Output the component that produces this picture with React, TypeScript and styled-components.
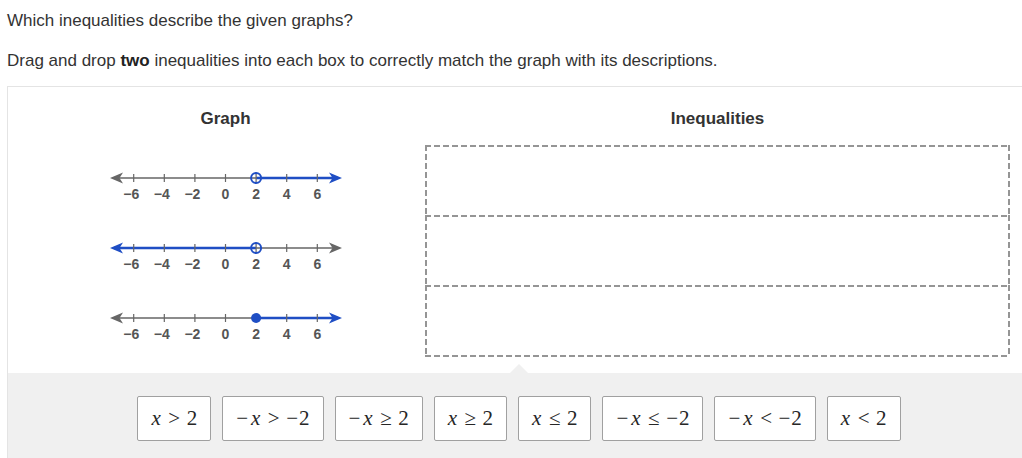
import styled, { createGlobalStyle } from "styled-components";

const GlobalStyle = createGlobalStyle`
  html, body {
    margin: 0;
    padding: 0;
    background: #ffffff;
    overflow: hidden;
  }
  body {
    font-family: "Liberation Sans", Arial, sans-serif;
    color: #333333;
  }
`;

const BLUE = "#1f4ec4";
const GRAY = "#666666";

const ORIGIN = 119.5;
const UNIT = 15.3;
const LINE_Y = 13;
const px = (v: number) => ORIGIN + v * UNIT;

type Ray = "right" | "left";

const arrowLeft = (color: string) => (
  <path d="M4 13 L17 7.5 L13.5 13 L17 18.5 Z" fill={color} />
);
const arrowRight = (color: string) => (
  <path d="M236 13 L223 7.5 L226.5 13 L223 18.5 Z" fill={color} />
);

const NumberLine = ({ ray, closed }: { ray: Ray; closed: boolean }) => {
  const labels = [-6, -4, -2, 0, 2, 4, 6];
  const at = px(2);
  const leftColor = ray === "left" ? BLUE : GRAY;
  const rightColor = ray === "right" ? BLUE : GRAY;
  return (
    <svg width="240" height="40" viewBox="0 0 240 40">
      <line
        x1={8}
        y1={LINE_Y}
        x2={at}
        y2={LINE_Y}
        stroke={leftColor}
        strokeWidth={ray === "left" ? 2.4 : 1.4}
      />
      <line
        x1={at}
        y1={LINE_Y}
        x2={232}
        y2={LINE_Y}
        stroke={rightColor}
        strokeWidth={ray === "right" ? 2.4 : 1.4}
      />
      {labels.map((t) => (
        <line
          key={t}
          x1={px(t)}
          y1={9}
          x2={px(t)}
          y2={17}
          stroke={GRAY}
          strokeWidth={1.2}
        />
      ))}
      {arrowLeft(leftColor)}
      {arrowRight(rightColor)}
      {closed ? (
        <circle cx={at} cy={LINE_Y} r={5} fill={BLUE} />
      ) : (
        <circle cx={at} cy={LINE_Y} r={5} fill="none" stroke={BLUE} strokeWidth={2} />
      )}
      {labels.map((l) => (
        <text
          key={l}
          x={px(l) + (l < 0 ? -2.5 : 0)}
          y={34}
          textAnchor="middle"
          fontSize="14"
          fontWeight="bold"
          fill="#555555"
          fontFamily="'Liberation Sans', Arial, sans-serif"
        >
          {l < 0 ? `\u2212${-l}` : l}
        </text>
      ))}
    </svg>
  );
};

type Kind = "var" | "num" | "rel" | "neg" | "negx";
type Piece = { t: string; kind: Kind };

const v = (t: string): Piece => ({ t, kind: "var" });
const n = (t: string): Piece => ({ t, kind: "num" });
const r = (t: string): Piece => ({ t, kind: "rel" });
const negx: Piece = { t: "\u2212", kind: "negx" };
const neg: Piece = { t: "\u2212", kind: "neg" };

const tiles: Piece[][] = [
  [v("x"), r(">"), n("2")],
  [negx, v("x"), r(">"), neg, n("2")],
  [negx, v("x"), r("\u2265"), n("2")],
  [v("x"), r("\u2265"), n("2")],
  [v("x"), r("\u2264"), n("2")],
  [negx, v("x"), r("\u2264"), neg, n("2")],
  [negx, v("x"), r("<"), neg, n("2")],
  [v("x"), r("<"), n("2")],
];

const piecePadding: Record<Kind, string> = {
  var: "0 1px 0 0",
  num: "0",
  rel: "0 6.5px",
  neg: "0 1px 0 0",
  negx: "0 3px 0 0",
};

const App = () => {
  return (
    <Page>
      <GlobalStyle />
      <Prompt>Which inequalities describe the given graphs?</Prompt>
      <Instruction>
        Drag and drop <strong>two</strong> inequalities into each box to
        correctly match the graph with its descriptions.
      </Instruction>
      <Panel>
        <MatchArea>
          <GraphColumn>
            <ColumnTitle>Graph</ColumnTitle>
            <GraphRow>
              <NumberLine ray="right" closed={false} />
            </GraphRow>
            <GraphRow>
              <NumberLine ray="left" closed={false} />
            </GraphRow>
            <GraphRow>
              <NumberLine ray="right" closed />
            </GraphRow>
          </GraphColumn>
          <DropColumn>
            <ColumnTitle>Inequalities</ColumnTitle>
            <DropBox />
            <DropBox />
            <DropBox $last />
          </DropColumn>
        </MatchArea>
        <Tray>
          <Notch />
          {tiles.map((pieces, i) => (
            <Tile key={i}>
              {pieces.map((p, j) => (
                <MathPart key={j} $kind={p.kind}>
                  {p.t}
                </MathPart>
              ))}
            </Tile>
          ))}
        </Tray>
      </Panel>
    </Page>
  );
};

const Page = styled.div`
  width: 1022px;
  height: 458px;
  overflow: hidden;
`;

const Prompt = styled.p`
  margin: 0;
  padding: 11px 0 0 7px;
  font-size: 17px;
  line-height: 20px;
`;

const Instruction = styled.p`
  margin: 0;
  padding: 20px 0 0 7px;
  font-size: 17px;
  line-height: 20px;

  strong {
    font-weight: bold;
    color: #222222;
  }
`;

const Panel = styled.div`
  margin: 15px 0 0 7px;
  width: 1022px;
  border-top: 1px solid #e4e4e4;
  border-left: 1px solid #e4e4e4;
`;

const MatchArea = styled.div`
  display: grid;
  grid-template-columns: 417px 585px;
  height: 286px;
`;

const GraphColumn = styled.div`
  display: flex;
  flex-direction: column;
  align-items: center;
  padding-left: 18px;
`;

const ColumnTitle = styled.div`
  font-size: 17px;
  line-height: 20px;
  font-weight: bold;
  color: #333333;
  text-align: center;
  align-self: stretch;
  padding-top: 22px;
  height: 58px;
  box-sizing: border-box;
`;

const GraphRow = styled.div`
  height: 70px;
  padding-top: 20px;
  box-sizing: border-box;
`;

const DropColumn = styled.div`
  display: flex;
  flex-direction: column;
`;

const DASH = "#959595";

const DropBox = styled.div<{ $last?: boolean }>`
  height: ${({ $last }) => ($last ? "72px" : "70px")};
  box-sizing: border-box;
  background-image: repeating-linear-gradient(
      90deg,
      ${DASH} 0 6px,
      transparent 6px 9px
    ),
    repeating-linear-gradient(180deg, ${DASH} 0 6px, transparent 6px 9px),
    repeating-linear-gradient(180deg, ${DASH} 0 6px, transparent 6px 9px),
    repeating-linear-gradient(90deg, ${DASH} 0 6px, transparent 6px 9px);
  background-repeat: no-repeat;
  background-size: 100% 2px, 2px 100%, 2px 100%,
    ${({ $last }) => ($last ? "100% 2px" : "0 0")};
  background-position: left top, left top, right top, left bottom;
`;

const Tray = styled.div`
  position: relative;
  background: #f0f0f0;
  height: 86px;
  display: flex;
  justify-content: center;
  align-items: flex-start;
  gap: 11px;
  padding-top: 23px;
  box-sizing: border-box;
`;

const Notch = styled.div`
  position: absolute;
  left: 502px;
  top: -9px;
  width: 0;
  height: 0;
  border-left: 9px solid transparent;
  border-right: 9px solid transparent;
  border-bottom: 9px solid #f0f0f0;
`;

const Tile = styled.div`
  height: 45px;
  box-sizing: border-box;
  padding: 0 13px;
  background: #ffffff;
  border: 1px solid #a0a0a0;
  border-radius: 2px;
  display: flex;
  align-items: center;
  justify-content: center;
  font-family: "Liberation Serif", "Times New Roman", serif;
  font-size: 21px;
  color: #262626;
`;

const MathPart = styled.span<{ $kind: Kind }>`
  font-style: ${({ $kind }) => ($kind === "var" ? "italic" : "normal")};
  padding: ${({ $kind }) => piecePadding[$kind]};
`;

export default App;
